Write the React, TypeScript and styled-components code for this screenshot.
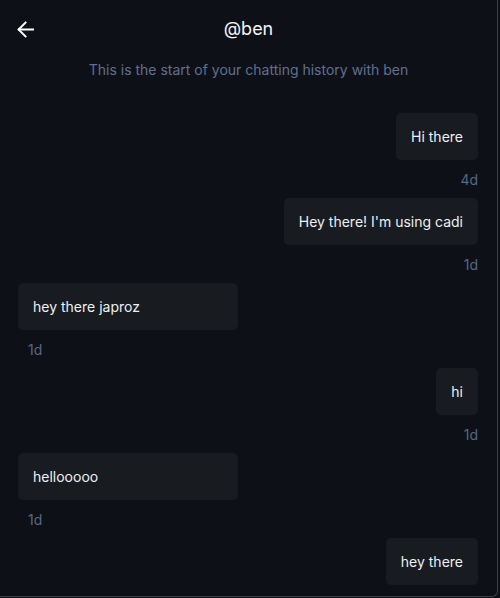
import React from "react";
import styled, { createGlobalStyle } from "styled-components";

const Global = createGlobalStyle`
  html, body { margin: 0; padding: 0; background: #0d1117; }
  body { font-family: Inter, "Noto Sans", "Liberation Sans", sans-serif; }
  * { box-sizing: border-box; }
`;

const Panel = styled.div`
  width: 498px;
  height: 597px;
  background: #0d1117;
  border-right: 1px solid #3b4048;
  border-bottom: 1px solid #3b4048;
  border-bottom-right-radius: 6px;
  overflow: hidden;
  display: flex;
  flex-direction: column;
`;

const Header = styled.div`
  height: 58px;
  flex-shrink: 0;
  display: flex;
  align-items: center;
  justify-content: center;
  position: relative;
  color: #f2f4f7;
`;

const BackButton = styled.button`
  position: absolute;
  left: 14px;
  top: 18px;
  width: 22px;
  height: 22px;
  padding: 0;
  border: none;
  background: transparent;
  display: flex;
  align-items: center;
  justify-content: center;
  color: #ffffff;
  cursor: pointer;
`;

const Title = styled.h1`
  margin: 0;
  font-size: 18px;
  font-weight: 400;
  line-height: 24px;
`;

const Intro = styled.p`
  margin: 2px 0 0;
  flex-shrink: 0;
  text-align: center;
  font-size: 14px;
  line-height: 20px;
  color: #61708f;
`;

const Messages = styled.div`
  flex-shrink: 0;
  padding: 33px 19px 0 18px;
  display: flex;
  flex-direction: column;
  gap: 10px;
`;

const Group = styled.div<{ $mine: boolean }>`
  display: flex;
  flex-direction: column;
  align-items: ${(p) => (p.$mine ? "flex-end" : "flex-start")};
`;

const Bubble = styled.div<{ $mine: boolean }>`
  background: #181b1f;
  color: #eef0f3;
  border-radius: 5px;
  padding: 14px 15px;
  font-size: 14px;
  line-height: 19px;
  min-width: ${(p) => (p.$mine ? "0" : "220px")};
`;

const Time = styled.div<{ $mine: boolean }>`
  margin-top: 12px;
  font-size: 14px;
  line-height: 16px;
  color: #566885;
  padding-left: ${(p) => (p.$mine ? "0" : "10px")};
`;

const msgs: { text: string; mine: boolean; time?: string }[] = [
  { text: "Hi there", mine: true, time: "4d" },
  { text: "Hey there! I'm using cadi", mine: true, time: "1d" },
  { text: "hey there japroz", mine: false, time: "1d" },
  { text: "hi", mine: true, time: "1d" },
  { text: "hellooooo", mine: false, time: "1d" },
  { text: "hey there", mine: true },
];

export default function App() {
  return (
    <>
      <Global />
      <Panel>
        <Header>
          <BackButton aria-label="Back">
            <svg width="17" height="17" viewBox="0 0 16 16" fill="none" stroke="currentColor" strokeWidth="1.9" strokeLinecap="square">
              <path d="M15 8H2" />
              <path d="M8 1.5 1.5 8 8 14.5" />
            </svg>
          </BackButton>
          <Title>@ben</Title>
        </Header>
        <Intro>This is the start of your chatting history with ben</Intro>
        <Messages>
          {msgs.map((m, i) => (
            <Group key={i} $mine={m.mine}>
              <Bubble $mine={m.mine}>{m.text}</Bubble>
              {m.time && <Time $mine={m.mine}>{m.time}</Time>}
            </Group>
          ))}
        </Messages>
      </Panel>
    </>
  );
}
